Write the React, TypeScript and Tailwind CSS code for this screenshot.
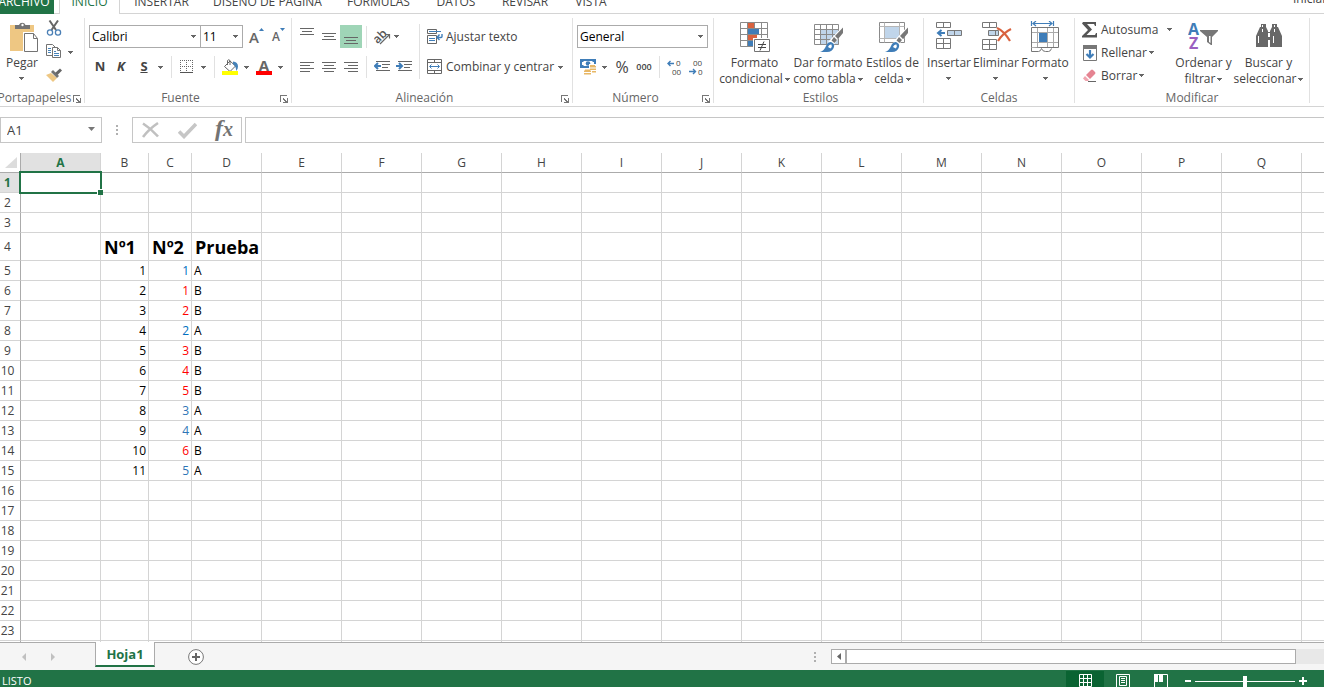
import React from 'react';

type Kids = { children?: React.ReactNode };

function Arrow({ className = '' }: { className?: string }) {
  return (
    <svg className={`shrink-0 ${className}`} width="5" height="3" viewBox="0 0 5 3" shapeRendering="crispEdges" aria-hidden="true">
      <path d="M0 0h5v1h-1v1h-1v1h-1v-1h-1v-1h-1z" fill="#666" />
    </svg>
  );
}

function ArrowButton({ label, className = '' }: { label: string; className?: string }) {
  return (
    <button aria-label={label} className={`flex h-5 w-[7px] shrink-0 items-center justify-center ${className}`}>
      <Arrow />
    </button>
  );
}

function Divider({ className = '' }: { className?: string }) {
  return <span className={`h-[22px] w-px shrink-0 bg-[#e1e1e1] ${className}`} />;
}

function Group({ label, launcher, className = '', children }: Kids & { label: string; launcher?: boolean; className?: string }) {
  return (
    <section aria-label={label} className={`flex h-[85px] shrink-0 flex-col border-r border-[#e1e1e1] ${className}`}>
      <div className="flex h-[75px]">{children}</div>
      <div className="flex h-[11px] items-center">
        <span className="flex min-w-0 flex-1 justify-center leading-[11px] whitespace-nowrap text-[#666]">{label}</span>
        {launcher && (
          <button aria-label={`Opciones de ${label}`} className="flex w-[15px] shrink-0 justify-center pt-0.5">
            <svg width="8" height="8" viewBox="0 0 8 8" shapeRendering="crispEdges" aria-hidden="true">
              <path d="M0 0h7v1H1v6H0zM3 3h1v1h1v1h1v1h1V3h1v5H3V7h2V6H4V5H3z" fill="#777" />
            </svg>
          </button>
        )}
      </div>
    </section>
  );
}

function BigButton({ icon, lines, arrow = 'inline', className = '' }: { icon: React.ReactNode; lines: string[]; arrow?: 'inline' | 'below'; className?: string }) {
  return (
    <button className={`flex shrink-0 flex-col items-center gap-0.5 pt-[3px] whitespace-nowrap ${className}`}>
      <span className="h-8 w-8">{icon}</span>
      <span className="flex flex-col items-center leading-4">
        <span>{lines[0]}</span>
        {arrow === 'below' ? (
          <Arrow className="mt-1.5" />
        ) : (
          <span className="flex items-center gap-0.5">
            {lines[1]}
            <Arrow />
          </span>
        )}
      </span>
    </button>
  );
}

function Svg({ w, h, children }: Kids & { w: number; h: number }) {
  return (
    <svg className="block shrink-0" width={w} height={h} viewBox={`0 0 ${w} ${h}`} fill="none" aria-hidden="true">
      {children}
    </svg>
  );
}

const PasteIcon = () => (
  <Svg w={32} h={32}>
    <path d="M4 4h24v26H4z" fill="#eec783" />
    <path d="M9 8V4h4a3.500 3.500 0 0 1 6.500 0H24v4z" fill="#737373" />
    <circle cx="16.500" cy="4" r="1.200" fill="#fff" />
    <path d="M17 11h11l4 6v15H17z" fill="#fff" />
    <path d="M18.500 12.500h9l4 5v13h-13z" fill="#fff" stroke="#737373" />
    <path d="M27.500 12.500v5h4" stroke="#737373" />
  </Svg>
);

const ScissorsIcon = () => (
  <Svg w={16} h={16}>
    <path d="M3.500 0.500 10 10M12 0.500 5.500 10" stroke="#666" strokeWidth="2" />
    <circle cx="4" cy="12.500" r="2.600" stroke="#4a7fb5" strokeWidth="1.300" />
    <circle cx="12" cy="12.500" r="2.600" stroke="#4a7fb5" strokeWidth="1.300" />
  </Svg>
);

const CopyIcon = () => (
  <Svg w={16} h={16}>
    <path d="M.5.5h6l3 3v8h-9z" fill="#fff" stroke="#737373" />
    <path d="M2 4.500h3M2 6.500h3M2 8.500h3" stroke="#4682b8" />
    <path d="M6.500 3.500h5l3 3v7h-8z" fill="#fff" stroke="#737373" />
    <path d="M11.500 3.500v3h3" stroke="#737373" />
    <path d="M8 7.500h2M8 9.500h5M8 11.500h5" stroke="#4682b8" />
  </Svg>
);

const BrushIcon = () => (
  <Svg w={16} h={14}>
    <path d="M0 7l5-2 6 5-4 4z" fill="#eec783" />
    <path d="M5 4l2-2 6 6-2 2z" fill="#737373" />
    <path d="M9 5l5-4.500 2 2L11.500 7z" fill="#666" />
  </Svg>
);

const BordersIcon = () => (
  <Svg w={14} h={14}>
    <path d="M.5 0v12M6.500 0v12M12.500 0v12M0 .5h13M0 6.500h13" stroke="#666" strokeDasharray="1 1" shapeRendering="crispEdges" />
    <path d="M0 12.500h13" stroke="#555" />
  </Svg>
);

const BucketIcon = () => (
  <Svg w={17} h={17}>
    <path d="M2.500 7.500 8 2l5.500 5L8 12.500z" fill="#fff" stroke="#666" />
    <path d="M5.500 6V1.500Q6.500 0 8 1.500V6" stroke="#666" />
    <path d="M11 2.500q5 .5 5 5 0 3-2 4.500 .5-4-3-7z" fill="#4682b8" />
    <path d="M0 12h16v4H0z" fill="#ff0" />
  </Svg>
);

const FontColorIcon = () => (
  <span className="flex w-4 flex-col items-center">
    <span className="h-3 text-[15px] leading-3 font-bold text-[#666]">A</span>
    <span className="h-1 w-full bg-[#f00]" />
  </span>
);

function Lines({ rows, h, w = 14 }: { rows: [number, number, number][]; h: number; w?: number }) {
  return (
    <Svg w={w} h={h}>
      {rows.map(([x, y, len]) => (
        <path key={y} d={`M${x} ${y + 0.5}h${len}`} stroke="#666" />
      ))}
    </Svg>
  );
}

const OrientationIcon = () => (
  <Svg w={17} h={16}>
    <text x="0" y="11" fontSize="12" fontWeight="600" fill="#555" transform="rotate(-45 7 9)">ab</text>
    <path d="M6 15 15 6M11.500 5.500H15.500V9.500" stroke="#666" strokeWidth="1.200" />
  </Svg>
);

function IndentIcon({ right }: { right?: boolean }) {
  return (
    <Svg w={16} h={12}>
      <path d="M2 .5h14M8 3.500h8M8 6.500h6M2 9.500h14" stroke="#666" />
      <path d={right ? 'M0 5h5M3 2l3 3-3 3' : 'M7 5H2M4 2 1 5l3 3'} stroke="#3f7db8" strokeWidth="2" />
    </Svg>
  );
}

const WrapIcon = () => (
  <Svg w={16} h={16}>
    <path d="M.5.5h9v4h-9zM.5 6.500h9v8h-9z" fill="#fff" stroke="#666" />
    <path d="M2 2.500h12M2 9.500h6M2 11.500h6" stroke="#3f7db8" />
    <path d="M15 5v2.500q0 1-1 1H10M12.500 5.500 10 8.500l2.500 2.500" stroke="#3f7db8" strokeWidth="1.400" />
  </Svg>
);

const MergeIcon = () => (
  <Svg w={16} h={16}>
    <path d="M.5.5h14v14H.5zM.5 3.500h14M.5 11.500h14M7.500.5v3M7.500 11.500v3" stroke="#666" />
    <path d="M3 7.500h9M4.500 5.500 2.500 7.500l2 2M10.500 5.500l2 2-2 2" stroke="#3f7db8" />
  </Svg>
);

const MoneyIcon = () => (
  <Svg w={17} h={17}>
    <path d="M0 0h16v9H0z" fill="#3f7db8" />
    <path d="M2 2h12v5H2z" fill="#fff" />
    <path d="M2 2h1.500v1H2zM12.500 2H14v1h-1.500zM2 6h1.500v1H2z" fill="#3f7db8" />
    <circle cx="8" cy="4.500" r="2.300" fill="#3f7db8" />
    <path d="M9 5h8v9h-4v3H3v-7h6z" fill="#fff" />
    <path d="M10 6h5v1h1v1.500h-6zM10 9.500h6V11h-6zM12 12h4v1.500h-4zM5 10.500h5v1h1V13H4v-1.500h1zM4 14h7v1.500H4z" fill="#e8b765" />
  </Svg>
);

function DecimalIcon({ more }: { more?: boolean }) {
  return (
    <Svg w={16} h={15}>
      <text x={more ? 9 : 4} y="6" fontSize="8" fill="#444">{more ? '0' : '00'}</text>
      <text x={more ? 5 : 9} y="15" fontSize="8" fill="#444">{more ? '00' : '0'}</text>
      <path d={more ? 'M7 3.500H1M3.500 1 1 3.500 3.500 6' : 'M0 11.500h6M4 9l2.500 2.500L4 14'} stroke="#3f7db8" strokeWidth="1.400" />
    </Svg>
  );
}

const ConditionalIcon = () => (
  <Svg w={32} h={32}>
    <path d="M1.500 1.500h27v24h-27z" fill="#fff" />
    <path d="M9 2h6v5H9zM9 14h9v5H9z" fill="#d9623f" />
    <path d="M9 8h11v5H9zM9 20h5v5H9z" fill="#3f7db8" />
    <path d="M1.500 1.500h27v24h-27zM8.500 1.500v24M15.500 1.500v6M22.500 1.500v18M1.500 7.500h27M1.500 13.500h27M1.500 19.500h27" stroke="#8a8a8a" />
    <path d="M14 17h17v15H14z" fill="#fff" />
    <path d="M15.500 18.500h15v12h-15z" fill="#fff" stroke="#737373" />
    <path d="M19 23.500h8M19 26.500h8M25 20.500l-4 9" stroke="#444" />
  </Svg>
);

const BrushOverlay = () => (
  <>
    <path d="M31 5v6L21 25l-5-4z" fill="#fff" />
    <path d="M31 6.500V12l-5 6-3-3zM22 16l3 3-2.500 3-3-2.500z" fill="#777" />
    <path d="M8 31q4-1 6-6 1.500-4 5-4 4 1.500 3 5-1.500 5-7 5z" fill="#3f7db8" />
    <path d="M16 26q1-3 3.500-2.500 1 2-1 4z" fill="#fff" />
  </>
);

const TableFormatIcon = () => (
  <Svg w={32} h={32}>
    <path d="M2.500 3.500h24v20h-24z" fill="#fff" />
    <path d="M9 9h18v15H9z" fill="#c0d5ea" />
    <path d="M2.500 3.500h24v20h-24zM8.500 3.500v20M14.500 3.500v20M20.500 3.500v20M2.500 8.500h24M2.500 13.500h24M2.500 18.500h24" stroke="#8a8a8a" />
    <BrushOverlay />
  </Svg>
);

const CellStyleIcon = () => (
  <Svg w={32} h={32}>
    <path d="M2.500 1.500h25v20h-25z" fill="#fff" stroke="#8a8a8a" />
    <path d="M7.500 1.500v20M22.500 1.500v20M2.500 5.500h25M2.500 17.500h25" stroke="#b5b5b5" />
    <path d="M8 6h14v11H8z" fill="#c0d5ea" />
    <BrushOverlay />
  </Svg>
);

const InsertIcon = () => (
  <Svg w={32} h={32}>
    <path d="M3.500 1.500h14v5h-14zM10.500 1.500v5M3.500 17.500h14v10h-14zM10.500 17.500v10M3.500 22.500h14" stroke="#777" />
    <path d="M14.500 9.500h14v5h-14zM21.500 9.500v5" fill="#c0d5ea" stroke="#777" />
    <path d="M12 12H6M8.500 9 5 12l3.500 3" stroke="#3f7db8" strokeWidth="2" />
  </Svg>
);

const DeleteIcon = () => (
  <Svg w={32} h={32}>
    <path d="M2.500 1.500h14v5h-14zM9.500 1.500v5M2.500 18.500h14v10h-14zM9.500 18.500v10M2.500 23.500h14" stroke="#777" />
    <path d="M8.500 9.500h10v5h-10zM15.500 9.500v5" fill="#c0d5ea" stroke="#777" />
    <path d="M17 7q7 3 13 13M31 8q-8 4-13 12" stroke="#d9623f" strokeWidth="2.200" />
  </Svg>
);

const FormatIcon = () => (
  <Svg w={32} h={32}>
    <path d="M2.500 0v5M24.500 0v5M4 2.500h19M7 0 4 2.500 7 5M20 0l3 2.500L20 5" stroke="#3f7db8" strokeWidth="1.200" />
    <path d="M2.500 6.500h27v20h-27z" fill="#fff" stroke="#777" />
    <path d="M8.500 7v19M18.500 7v19M24.500 7v19M3 11.500h26M3 21.500h26" stroke="#aaa" />
    <path d="M10 12h8v9h-8z" fill="#3f7db8" />
    <path d="M2.500 26.500v4h7q2 0 3-3 1 3 4 3h3q2 0 3-3" fill="#fff" stroke="#777" />
  </Svg>
);

const SortFilterIcon = () => (
  <Svg w={32} h={32}>
    <text x="0" y="14" fontSize="16" fontWeight="700" fill="#3f7db8">A</text>
    <text x="1" y="28" fontSize="16" fontWeight="700" fill="#9a5fc0">Z</text>
    <path d="M12 9h18v1l-6 6v8h-1l-4-3v-5l-7-6z" fill="#777" />
    <path d="M21 15h1.500v7L21 21z" fill="#fff" />
  </Svg>
);

const BinocularsIcon = () => (
  <Svg w={32} h={32}>
    <path d="M8 3h5v3l2 4v16H3V15L7 6h1zM24 3h-5v3l-2 4v16h12V15l-4-9h-1z" fill="#686868" />
    <path d="M13 11h6v8h-6z" fill="#686868" />
    <path d="M15 12h2v4h-2zM9 4h1v2H9zM21 4h1v2h-1zM5 15h1v7H5zM20 15h1v7h-1zM9 8h1v3H9zM21 8h1v3h-1z" fill="#fff" />
  </Svg>
);

const SigmaIcon = () => (
  <Svg w={16} h={16}>
    <path d="M1 0h13v4h-1l-1-2H5l5 5.500L4.500 13H13l1-2h1v4.500H0V14l6-6L0 1.500z" fill="#555" />
  </Svg>
);

const FillIcon = () => (
  <Svg w={16} h={16}>
    <path d="M1.500.5h13v15h-13z" fill="#fff" stroke="#777" />
    <path d="M1 0h14v4H1z" fill="#777" />
    <path d="M8 5v7M4.500 9 8 12.500 11.500 9" stroke="#3f7db8" strokeWidth="2.200" />
  </Svg>
);

const EraserIcon = () => (
  <Svg w={16} h={14}>
    <path d="M4 6 9 1q1-1 2 0l2 2q1 1 0 2L8 10z" fill="#e58492" />
    <path d="M3 7l4 4-1 1H3.500L1 9.500z" fill="#f0a5af" />
    <path d="M6 12.500h8" stroke="#666" />
  </Svg>
);

function SmallRow({ icon, label, wide }: { icon: React.ReactNode; label: string; wide?: boolean }) {
  return (
    <button className={`flex h-[23px] items-center text-left ${wide ? 'w-[90px]' : ''}`}>
      <span className="mr-[3px] flex w-4 justify-center">{icon}</span>
      <span className={wide ? 'flex-1' : 'mr-0.5'}>{label}</span>
      <Arrow />
    </button>
  );
}

function Combo({ label, value, className }: { label: string; value: string; className: string }) {
  return (
    <div className={`relative h-[23px] shrink-0 ${className}`}>
      <select aria-label={label} defaultValue={value} className="h-full w-full appearance-none border border-[#ababab] bg-white pl-0.5 text-black outline-none">
        <option>{value}</option>
      </select>
      <Arrow className="pointer-events-none absolute top-2.5 right-[5px]" />
    </div>
  );
}

const TABS = ['INSERTAR', 'DISEÑO DE PÁGINA', 'FÓRMULAS', 'DATOS', 'REVISAR', 'VISTA'];
const TAB_WIDTHS = ['w-[83px]', 'w-[129px]', 'w-[93px]', 'w-[62px]', 'w-[76px]', 'w-[56px]'];

function RibbonTabs() {
  return (
    <nav aria-label="Cinta de opciones" className="flex h-3.5 shrink-0 items-end overflow-hidden whitespace-nowrap">
      <button className="h-6 w-[54px] bg-[#217346] text-white">
        <span className="-ml-1.5">ARCHIVO</span>
      </button>
      <span className="w-[5px] self-stretch border-b border-[#d4d4d4]" />
      <button className="h-6 w-[61px] border-x border-[#d4d4d4] text-[#217346]">INICIO</button>
      <div className="flex h-6 flex-1 border-b border-[#d4d4d4]">
        {TABS.map((t, i) => (
          <button key={t} className={TAB_WIDTHS[i]}>{t}</button>
        ))}
        <a href="#" className="-mr-9 ml-auto w-[67px] self-start leading-[18px]">Iniciar sesión</a>
      </div>
    </nav>
  );
}

function Ribbon() {
  return (
    <div className="flex h-[93px] shrink-0 overflow-hidden border-b border-[#d4d4d4] pt-1">
      <Group label="Portapapeles" launcher className="w-[85px]">
        <BigButton className="w-11" icon={<PasteIcon />} lines={['Pegar']} arrow="below" />
        <div className="flex flex-col gap-2 pt-0.5 pl-0.5">
          <button aria-label="Cortar"><ScissorsIcon /></button>
          <div className="flex h-4 items-center gap-[5px]">
            <button aria-label="Copiar"><CopyIcon /></button>
            <ArrowButton label="Opciones de copiar" />
          </div>
          <button aria-label="Copiar formato"><BrushIcon /></button>
        </div>
      </Group>

      <Group label="Fuente" launcher className="w-[207px]">
        <div className="flex flex-col gap-2 pt-[7px] pl-1">
          <div className="flex h-[23px] items-center">
            <Combo label="Fuente" value="Calibri" className="w-28" />
            <Combo label="Tamaño de fuente" value="11" className="-ml-px w-[43px]" />
            <button aria-label="Aumentar tamaño" className="ml-1.5 flex h-[17px] items-start">
              <span className="self-end text-[15px] leading-4 font-semibold text-[#666]">A</span>
              <svg width="5" height="3" viewBox="0 0 5 3" aria-hidden="true"><path d="M2.500 0 5 3H0z" fill="#3f7db8" /></svg>
            </button>
            <button aria-label="Reducir tamaño" className="ml-2 flex h-[17px] items-start">
              <span className="self-end text-xs leading-4 font-semibold text-[#666]">A</span>
              <svg width="5" height="3" viewBox="0 0 5 3" aria-hidden="true"><path d="M0 0h5L2.500 3z" fill="#3f7db8" /></svg>
            </button>
          </div>
          <div className="flex h-[22px] items-center">
            <button className="w-[22px] text-[13px] font-bold">N</button>
            <button className="w-5 text-[13px] font-bold italic">K</button>
            <button className="w-[26px] text-[13px] font-bold underline">S</button>
            <ArrowButton label="Opciones de subrayado" />
            <Divider className="ml-[7px]" />
            <button aria-label="Bordes" className="ml-2"><BordersIcon /></button>
            <ArrowButton label="Opciones de bordes" className="ml-1.5" />
            <Divider className="ml-[7px]" />
            <button aria-label="Color de relleno" className="ml-[7px]"><BucketIcon /></button>
            <ArrowButton label="Opciones de relleno" className="ml-1" />
            <button aria-label="Color de fuente" className="ml-1.5"><FontColorIcon /></button>
            <ArrowButton label="Opciones de color" className="ml-[5px]" />
          </div>
        </div>
      </Group>

      <Group label="Alineación" launcher className="w-[281px]">
        <div className="flex flex-col gap-2 pt-[7px] pl-1">
          <div className="flex h-[23px] items-center">
            <button aria-label="Alinear arriba" className="flex h-[23px] w-[22px] items-start justify-center pt-[3px]">
              <Lines h={7} rows={[[0, 0, 14], [2, 3, 10], [0, 6, 14]]} />
            </button>
            <button aria-label="Alinear en el medio" className="flex h-[23px] w-[22px] items-center justify-center">
              <Lines h={7} rows={[[0, 0, 14], [2, 3, 10], [0, 6, 14]]} />
            </button>
            <button aria-label="Alinear abajo" aria-pressed="true" className="flex h-[23px] w-[22px] items-end justify-center bg-[#9fd5b7] pb-1">
              <Lines h={7} rows={[[0, 0, 14], [2, 3, 10], [0, 6, 14]]} />
            </button>
            <Divider className="ml-1" />
            <button aria-label="Orientación" className="ml-[7px]"><OrientationIcon /></button>
            <ArrowButton label="Opciones de orientación" className="ml-0.5" />
          </div>
          <div className="flex h-[22px] items-center">
            <button aria-label="Alinear a la izquierda" className="flex w-[22px] justify-center">
              <Lines h={10} rows={[[0, 0, 14], [0, 3, 10], [0, 6, 14], [0, 9, 10]]} />
            </button>
            <button aria-label="Centrar" className="flex w-[22px] justify-center">
              <Lines h={10} rows={[[0, 0, 14], [2, 3, 10], [0, 6, 14], [2, 9, 10]]} />
            </button>
            <button aria-label="Alinear a la derecha" className="flex w-[22px] justify-center">
              <Lines h={10} rows={[[0, 0, 14], [4, 3, 10], [0, 6, 14], [4, 9, 10]]} />
            </button>
            <Divider className="ml-1" />
            <button aria-label="Disminuir sangría" className="ml-[7px]"><IndentIcon /></button>
            <button aria-label="Aumentar sangría" className="ml-1.5"><IndentIcon right /></button>
          </div>
        </div>
        <span className="mt-1.5 ml-[7px] h-[55px] w-px bg-[#e1e1e1]" />
        <div className="flex flex-1 flex-col gap-2 pt-[7px] pl-[7px]">
          <button className="flex h-[23px] items-center gap-[3px]"><WrapIcon />Ajustar texto</button>
          <div className="flex h-[22px] items-center justify-between pr-2">
            <button className="flex items-center gap-[3px] whitespace-nowrap"><MergeIcon />Combinar y centrar</button>
            <ArrowButton label="Opciones de combinar" />
          </div>
        </div>
      </Group>

      <Group label="Número" launcher className="w-[141px]">
        <div className="flex flex-col gap-2 pt-[7px] pl-1">
          <Combo label="Formato de número" value="General" className="w-[131px]" />
          <div className="flex h-[22px] items-center">
            <button aria-label="Formato de contabilidad" className="ml-[3px]"><MoneyIcon /></button>
            <ArrowButton label="Opciones de moneda" className="ml-1" />
            <button aria-label="Estilo porcentual" className="ml-[7px] w-[14px] text-center text-base">%</button>
            <button aria-label="Estilo millares" className="ml-[7px] w-4 text-[9px] font-semibold">000</button>
            <Divider className="ml-[7px]" />
            <button aria-label="Aumentar decimales" className="ml-[7px]"><DecimalIcon more /></button>
            <button aria-label="Disminuir decimales" className="ml-1.5"><DecimalIcon /></button>
          </div>
        </div>
      </Group>

      <Group label="Estilos" className="w-[210px] pl-1">
        <BigButton className="w-[73px]" icon={<ConditionalIcon />} lines={['Formato', 'condicional']} />
        <BigButton className="w-[74px]" icon={<TableFormatIcon />} lines={['Dar formato', 'como tabla']} />
        <BigButton className="w-[55px]" icon={<CellStyleIcon />} lines={['Estilos de', 'celda']} />
      </Group>

      <Group label="Celdas" className="w-[151px] px-0.5">
        <BigButton className="w-[46px]" icon={<InsertIcon />} lines={['Insertar']} arrow="below" />
        <BigButton className="w-12" icon={<DeleteIcon />} lines={['Eliminar']} arrow="below" />
        <BigButton className="w-[50px]" icon={<FormatIcon />} lines={['Formato']} arrow="below" />
      </Group>

      <Group label="Modificar" className="w-[235px]">
        <div className="flex w-[100px] flex-col items-start pl-[7px]">
          <SmallRow wide icon={<SigmaIcon />} label="Autosuma" />
          <SmallRow icon={<FillIcon />} label="Rellenar" />
          <SmallRow icon={<EraserIcon />} label="Borrar" />
        </div>
        <BigButton className="w-[57px]" icon={<SortFilterIcon />} lines={['Ordenar y', 'filtrar']} />
        <BigButton className="w-[73px]" icon={<BinocularsIcon />} lines={['Buscar y', 'seleccionar']} />
      </Group>
    </div>
  );
}

function Dots() {
  return (
    <svg className="shrink-0" width="2" height="10" viewBox="0 0 2 10" aria-hidden="true">
      <path d="M0 0h2v2H0zM0 4h2v2H0zM0 8h2v2H0z" fill="#b0b0b0" />
    </svg>
  );
}

function FormulaBar() {
  return (
    <div className="flex h-[46px] shrink-0 items-start pt-2.5">
      <div className="relative h-[26px] w-[102px] shrink-0">
        <input aria-label="Cuadro de nombres" defaultValue="A1" className="h-full w-full border border-[#c6c6c6] pl-1.5 text-[13px] outline-none" />
        <svg className="pointer-events-none absolute top-2.5 right-[7px]" width="7" height="4" viewBox="0 0 7 4" aria-hidden="true"><path d="M0 0h7L3.500 4z" fill="#777" /></svg>
      </div>
      <span className="flex h-[26px] w-[30px] items-center justify-center"><Dots /></span>
      <div className="flex h-[26px] w-[110px] shrink-0 items-center justify-between border border-[#c6c6c6] px-2">
        <button aria-label="Cancelar">
          <Svg w={19} h={18}><path d="M2 2.500q8 5 15 13M17 2Q8 8 2 16" stroke="#c0c0c0" strokeWidth="2.600" /></Svg>
        </button>
        <button aria-label="Introducir">
          <Svg w={19} h={18}><path d="M1 10.500l5 5L18 3" stroke="#c6c6c6" strokeWidth="3.600" /></Svg>
        </button>
        <button aria-label="Insertar función" className="pb-1 font-[Liberation_Serif,serif] text-[24px] leading-5 font-bold text-[#737373] italic">
          f<span className="text-[20px]">x</span>
        </button>
      </div>
      <input aria-label="Barra de fórmulas" className="ml-[3px] h-[26px] min-w-0 flex-1 border border-r-0 border-[#c6c6c6] px-2 outline-none" />
    </div>
  );
}

const COLUMNS = 'ABCDEFGHIJKLMNOPQ'.split('');
const COLUMN_WIDTHS = ['w-20', 'w-12', 'w-[43px]', 'w-[70px]'];

const BLUE = 'text-[#0070c0]';
const STEEL = 'text-[#2e75b6]';
const RED = 'text-[#f00]';
const DATA: [number, string, string][] = [
  [1, BLUE, 'A'],
  [1, RED, 'B'],
  [2, RED, 'B'],
  [2, BLUE, 'A'],
  [3, RED, 'B'],
  [4, RED, 'B'],
  [5, RED, 'B'],
  [3, STEEL, 'A'],
  [4, STEEL, 'A'],
  [6, RED, 'B'],
  [5, STEEL, 'A'],
];

function cellContent(row: number, col: string): { text: React.ReactNode; style: string } {
  if (row === 4) {
    const title: Record<string, string> = { B: 'Nº1', C: 'Nº2', D: 'Prueba' };
    return { text: title[col], style: 'pl-[3px] text-[18px] font-bold text-black' };
  }
  const item = DATA[row - 5];
  if (item) {
    if (col === 'B') return { text: row - 4, style: 'pr-0.5 text-right text-black' };
    if (col === 'C') return { text: item[0], style: `pr-0.5 text-right ${item[1]}` };
    if (col === 'D') return { text: item[2], style: 'pl-0.5 text-black' };
  }
  return { text: null, style: '' };
}

function Sheet() {
  const rows = Array.from({ length: 24 }, (_, i) => i + 1);
  return (
    <div className="min-h-0 flex-1 overflow-hidden">
      <table className="w-full table-fixed border-separate border-spacing-0">
        <colgroup>
          <col className="w-[21px]" />
          {COLUMNS.map((c, i) => (
            <col key={c} className={COLUMN_WIDTHS[i] ?? 'w-20'} />
          ))}
          <col />
        </colgroup>
        <thead>
          <tr className="h-5">
            <th className="border-r border-b border-[#ababab] p-0">
              <svg className="ml-[5px]" width="12" height="11" viewBox="0 0 12 11" aria-hidden="true"><path d="M12 0v11H0z" fill="#dcdcdc" /></svg>
            </th>
            {COLUMNS.map((c, i) => (
              <th
                key={c}
                scope="col"
                className={`border-r border-b border-r-[#d4d4d4] border-b-[#ababab] p-0 leading-[18px] ${i === 0 ? 'bg-[#e1e1e1] font-bold text-[#217346]' : 'font-normal'}`}
              >
                {c}
              </th>
            ))}
            <th className="border-b border-[#ababab] p-0" />
          </tr>
        </thead>
        <tbody>
          {rows.map((r) => (
            <tr key={r} className={r === 4 ? 'h-7' : 'h-5'}>
              <th
                scope="row"
                className={`border-r border-b border-r-[#ababab] border-b-[#d4d4d4] p-0 pt-px pr-[5px] leading-[18px] ${r === 1 ? 'bg-[#e1e1e1] font-bold text-[#217346]' : 'font-normal'}`}
              >
                {r}
              </th>
              {COLUMNS.map((c) => {
                const { text, style } = cellContent(r, c);
                const selected = r === 1 && c === 'A';
                return (
                  <td key={c} className={`border-r border-b border-[#d4d4d4] p-0 pt-px leading-[18px] whitespace-nowrap ${selected ? 'relative' : ''} ${style}`}>
                    {selected && (
                      <>
                        <span className="absolute -inset-0.5 border-2 border-[#217346]" />
                        <span className="absolute -right-[3px] -bottom-[3px] size-1.5 border-t border-l border-white bg-[#217346]" />
                      </>
                    )}
                    {text}
                  </td>
                );
              })}
              <td className="border-b border-[#d4d4d4] p-0" />
            </tr>
          ))}
        </tbody>
      </table>
    </div>
  );
}

function SheetTabs() {
  return (
    <div className="flex h-7 shrink-0 border-t border-[#ababab] bg-[#f5f5f5]">
      <div className="flex w-[95px] items-center gap-[25px] pl-[22px]">
        <button aria-label="Hoja anterior"><Svg w={4} h={8}><path d="M4 0v8L0 4z" fill="#c0c0c0" /></Svg></button>
        <button aria-label="Hoja siguiente"><Svg w={4} h={8}><path d="M0 0v8l4-4z" fill="#c0c0c0" /></Svg></button>
      </div>
      <button className="-mt-px h-[25px] w-[60px] border-x border-b-2 border-x-[#ababab] border-b-[#217346] bg-white pt-0.5 text-[13px] font-bold text-[#217346]">Hoja1</button>
      <button aria-label="Hoja nueva" className="ml-[33px]">
        <Svg w={16} h={16}>
          <circle cx="8" cy="8" r="7.400" fill="#fff" stroke="#777" />
          <path d="M8 4v8M4 8h8" stroke="#666" strokeWidth="2" />
        </Svg>
      </button>
      <div className="ml-auto flex w-[38.5%] items-center">
        <Dots />
        <div role="scrollbar" aria-controls="root" aria-orientation="horizontal" aria-valuenow={0} className="ml-[15px] flex h-[15px] flex-1 bg-[#e8e8e8]">
          <button aria-label="Desplazar a la izquierda" className="flex w-[15px] items-center justify-center border border-[#ababab] bg-white">
            <Svg w={4} h={7}><path d="M4 0v7L0 3.500z" fill="#666" /></Svg>
          </button>
          <span className="mr-7 -ml-px flex-1 border border-l-2 border-[#ababab] bg-white" />
        </div>
      </div>
    </div>
  );
}

function StatusBar() {
  return (
    <footer className="h-[17px] shrink-0 overflow-hidden bg-[#217346] text-white">
      <div className="flex h-[22px] items-center">
        <span className="pl-0.5 text-[11px]">LISTO</span>
        <button aria-label="Normal" className="ml-auto flex h-full w-[38px] items-center justify-center border-t border-[#217346] bg-[#0a6332] pb-0.5">
          <Svg w={13} h={13}><path d="M.5.5h12v12H.5zM4.500 0v13M8.500 0v13M0 4.500h13M0 8.500h13" stroke="#fff" /></Svg>
        </button>
        <button aria-label="Diseño de página" className="flex h-full w-[38px] items-center justify-center">
          <Svg w={14} h={14}><path d="M.5.5h13v13H.5zM3.500 2.500h7v9h-7zM5 4.500h4M5 6.500h4M5 8.500h4" stroke="#fff" /></Svg>
        </button>
        <button aria-label="Vista previa de salto de página" className="flex h-full w-[38px] items-center justify-center">
          <Svg w={14} h={14}>
            <path d="M.5.5h13v13H.5z" stroke="#fff" />
            <path d="M0 0h4v8H0zM5 0h4v8H5z" fill="#fff" />
          </Svg>
        </button>
        <button aria-label="Alejar" className="ml-[5px]"><Svg w={6} h={2}><path d="M0 0h6v2H0z" fill="#fff" /></Svg></button>
        <input
          type="range"
          aria-label="Zoom"
          defaultValue={50}
          className="mx-1 h-[10px] w-[100px] appearance-none bg-transparent [&::-webkit-slider-runnable-track]:h-px [&::-webkit-slider-runnable-track]:bg-white [&::-webkit-slider-thumb]:-mt-[5px] [&::-webkit-slider-thumb]:h-[11px] [&::-webkit-slider-thumb]:w-1 [&::-webkit-slider-thumb]:appearance-none [&::-webkit-slider-thumb]:bg-white"
        />
        <button aria-label="Acercar" className="mr-[17px]"><Svg w={8} h={8}><path d="M3 0h2v8H3zM0 3h8v2H0z" fill="#fff" /></Svg></button>
      </div>
    </footer>
  );
}

export default function App() {
  return (
    <div className="flex h-screen flex-col overflow-hidden bg-white font-[Open_Sans,Noto_Sans,sans-serif] text-xs text-[#444]">
      <RibbonTabs />
      <Ribbon />
      <FormulaBar />
      <Sheet />
      <SheetTabs />
      <StatusBar />
    </div>
  );
}
